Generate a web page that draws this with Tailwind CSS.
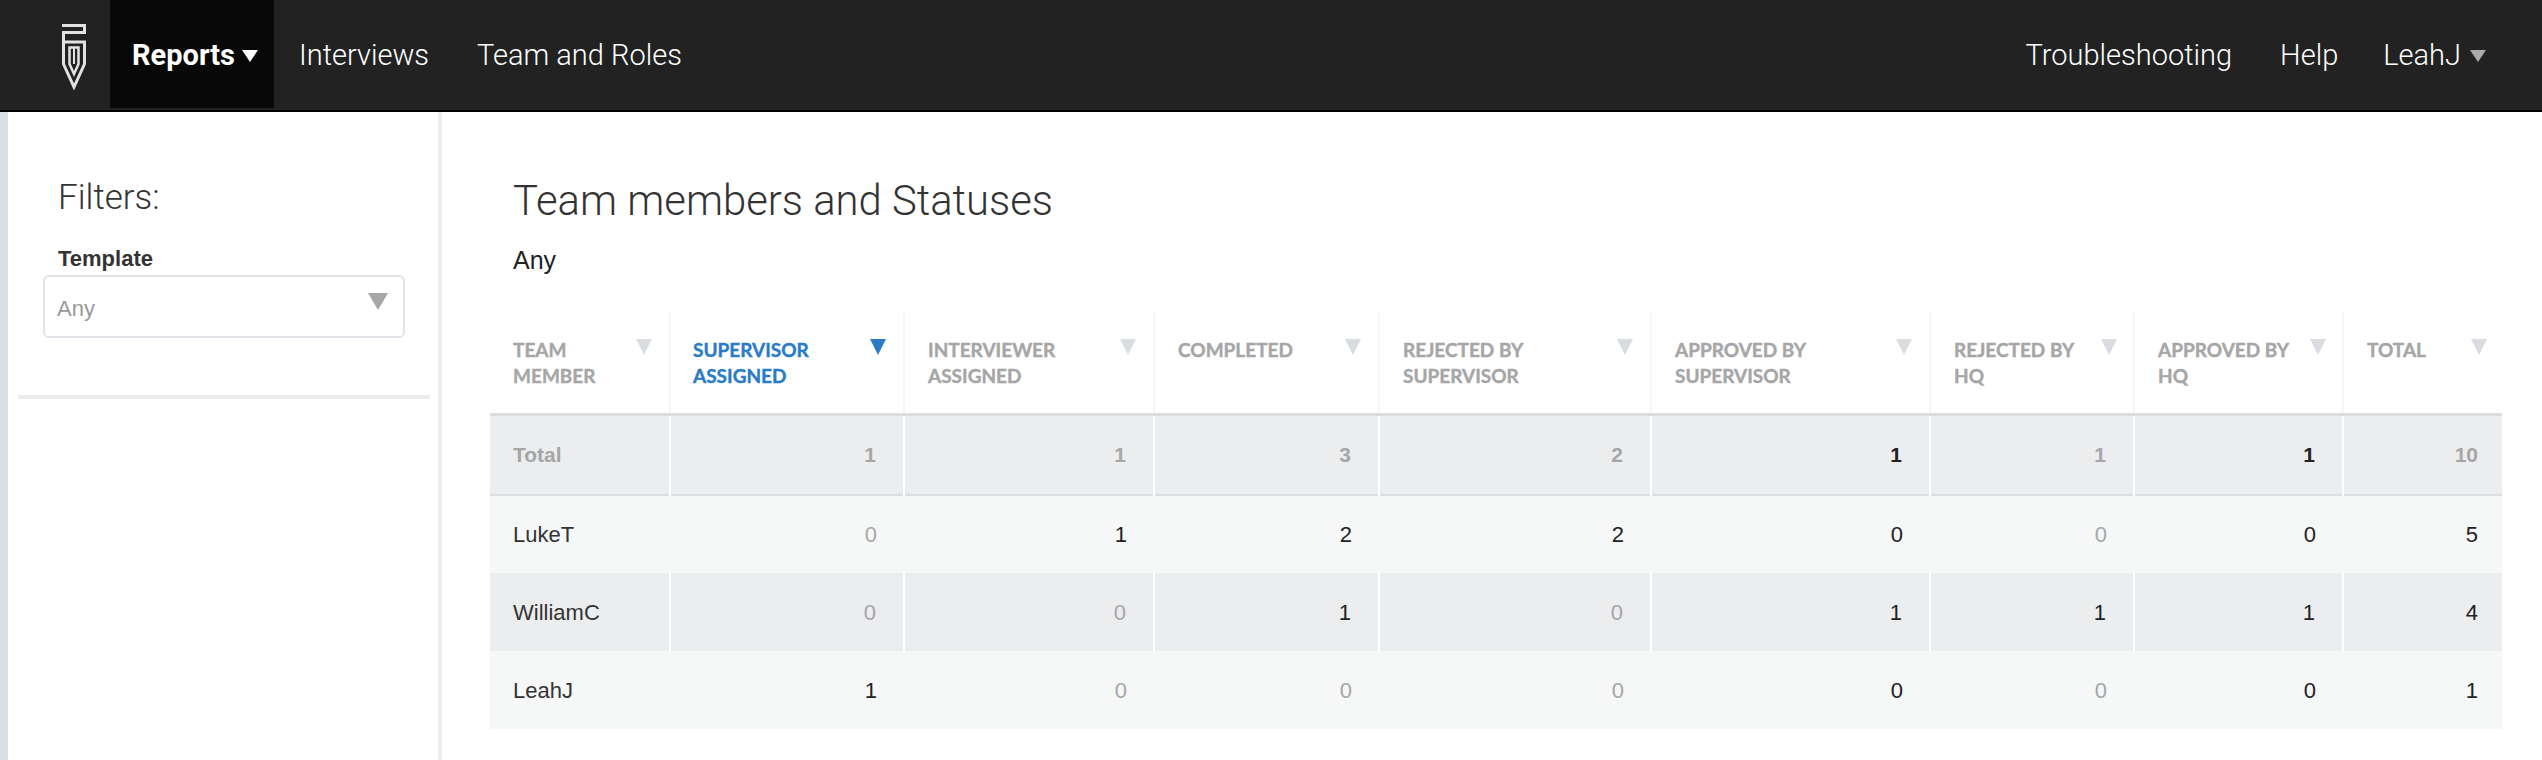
<!DOCTYPE html>
<html lang="en">
<head>
<meta charset="utf-8">
<title>Team members and Statuses</title>
<script src="https://cdn.jsdelivr.net/npm/@tailwindcss/browser@4"></script>
</head>
<body class="bg-white overflow-hidden font-['Liberation_Sans',sans-serif] text-[22px] text-[#333]">
<div class="h-[760px] w-[2542px] flex flex-col overflow-hidden">
  <header class="h-[112px] shrink-0 bg-[#222] border-b-2 border-black flex items-start font-['Roboto',sans-serif] text-[29px] leading-[34px] text-white font-light">
    <a class="w-[110px] h-[110px] flex pl-[62px] pt-[24px]">
      <svg width="24" height="66" viewBox="0 0 24 66" fill="none" stroke="#e2e2e2" stroke-width="3">
        <path d="M0 1.5H22.5V8.5H1.5V18H24M1.5 18V40L12 63L22.5 40V18"/>
        <path d="M7.5 23.5H16.5V40L12 50L7.5 40Z" stroke-width="2.5"/>
        <path d="M12 23V40" stroke-width="2"/>
      </svg>
    </a>
    <a class="w-[164px] h-[108px] bg-[#080808] flex items-center pl-[22px] pt-[1px] font-bold gap-[7px]">Reports
      <span class="w-0 h-0 border-x-[8px] border-x-transparent border-t-[12px] border-t-white mt-[3px]"></span></a>
    <a class="h-[108px] flex items-center ml-[25px] pt-[1px]">Interviews</a>
    <a class="h-[108px] flex items-center ml-[48px] pt-[1px]">Team and Roles</a>
    <div class="ml-auto flex items-center h-[108px] pr-[56px] pt-[1px]">
      <a>Troubleshooting</a>
      <a class="ml-[48px]">Help</a>
      <a class="ml-[45px]">LeahJ</a>
      <span class="ml-[9px] mt-[3px] w-0 h-0 border-x-[8px] border-x-transparent border-t-[12px] border-t-[#aaa]"></span>
    </div>
  </header>
  <div class="flex flex-1 min-h-0">
    <div class="w-[8px] bg-[#dce0e4] shrink-0"></div>
    <aside class="w-[434px] shrink-0 border-r-4 border-[#ececee] pt-[64px] pl-[10px] pr-[8px]">
      <div class="pl-[40px] font-['Roboto',sans-serif] font-light text-[35px] leading-[44px] text-[#333]">Filters:</div>
      <div class="pl-[40px] mt-[26px] font-bold leading-[26px]">Template</div>
      <div class="ml-[25px] mt-[3px] w-[362px] h-[63px] border-2 border-[#dfe3e7] rounded-[6px] flex items-center justify-between pl-[12px] pr-[15px] text-[#999]">
        <span class="mt-[4px]">Any</span>
        <span class="w-0 h-0 border-x-[10px] border-x-transparent border-t-[17px] border-t-[#a6a6a6] -mt-[10px]"></span>
      </div>
      <div class="h-[4px] bg-[#ececee] mt-[57px]"></div>
    </aside>
    <main class="flex-1 min-w-0 pl-[48px]">
      <h1 class="pl-[23px] mt-[62px] font-['Roboto',sans-serif] font-light text-[41.8px] leading-[54px] text-[#333]">Team members and Statuses</h1>
      <p class="pl-[23px] mt-[16px] text-[25px] leading-[32px] text-[#222]">Any</p>
      <table class="mt-[35px] w-[2012px] table-fixed border-collapse">
        <colgroup>
          <col class="w-[180px]"><col class="w-[234px]"><col class="w-[250px]"><col class="w-[225px]"><col class="w-[272px]"><col class="w-[279px]"><col class="w-[204px]"><col class="w-[209px]"><col class="w-[159px]">
        </colgroup>
        <thead class="font-['Lato',sans-serif] text-[19px] leading-[26px] text-[#a6a6a6] [-webkit-text-stroke:0.4px]">
          <tr class="h-[103px] border-b-[3px] border-[#dcdddf] align-top">
            <th class="border-r-2 border-[#f5f6f6] font-bold text-left pt-[26px] pl-[23px] pr-[17px]"><div class="flex justify-between"><span>TEAM<br>MEMBER</span><i class="block shrink-0 mt-[2px] w-0 h-0 border-x-[8px] border-x-transparent border-t-[16px] border-t-[#d9dde1]"></i></div></th>
            <th class="border-r-2 border-[#f5f6f6] font-bold text-left pt-[26px] pl-[22px] pr-[17px] text-[#2a7cc7]"><div class="flex justify-between"><span>SUPERVISOR<br>ASSIGNED</span><i class="block shrink-0 mt-[2px] w-0 h-0 border-x-[8px] border-x-transparent border-t-[16px] border-t-[#2a7cc7]"></i></div></th>
            <th class="border-r-2 border-[#f5f6f6] font-bold text-left pt-[26px] pl-[23px] pr-[17px]"><div class="flex justify-between"><span>INTERVIEWER<br>ASSIGNED</span><i class="block shrink-0 mt-[2px] w-0 h-0 border-x-[8px] border-x-transparent border-t-[16px] border-t-[#d9dde1]"></i></div></th>
            <th class="border-r-2 border-[#f5f6f6] font-bold text-left pt-[26px] pl-[23px] pr-[17px]"><div class="flex justify-between"><span>COMPLETED</span><i class="block shrink-0 mt-[2px] w-0 h-0 border-x-[8px] border-x-transparent border-t-[16px] border-t-[#d9dde1]"></i></div></th>
            <th class="border-r-2 border-[#f5f6f6] font-bold text-left pt-[26px] pl-[23px] pr-[17px]"><div class="flex justify-between"><span>REJECTED BY<br>SUPERVISOR</span><i class="block shrink-0 mt-[2px] w-0 h-0 border-x-[8px] border-x-transparent border-t-[16px] border-t-[#d9dde1]"></i></div></th>
            <th class="border-r-2 border-[#f5f6f6] font-bold text-left pt-[26px] pl-[23px] pr-[17px]"><div class="flex justify-between"><span>APPROVED BY<br>SUPERVISOR</span><i class="block shrink-0 mt-[2px] w-0 h-0 border-x-[8px] border-x-transparent border-t-[16px] border-t-[#d9dde1]"></i></div></th>
            <th class="border-r-2 border-[#f5f6f6] font-bold text-left pt-[26px] pl-[23px] pr-[16px]"><div class="flex justify-between"><span>REJECTED BY<br>HQ</span><i class="block shrink-0 mt-[2px] w-0 h-0 border-x-[8px] border-x-transparent border-t-[16px] border-t-[#d9dde1]"></i></div></th>
            <th class="border-r-2 border-[#f5f6f6] font-bold text-left pt-[26px] pl-[23px] pr-[16px]"><div class="flex justify-between"><span>APPROVED BY<br>HQ</span><i class="block shrink-0 mt-[2px] w-0 h-0 border-x-[8px] border-x-transparent border-t-[16px] border-t-[#d9dde1]"></i></div></th>
            <th class="font-bold text-left pt-[26px] pl-[23px] pr-[15px]"><div class="flex justify-between"><span>TOTAL</span><i class="block shrink-0 mt-[2px] w-0 h-0 border-x-[8px] border-x-transparent border-t-[16px] border-t-[#d9dde1]"></i></div></th>
          </tr>
        </thead>
        <tbody class="text-right">
          <tr class="h-[81px] bg-[#ecedef] border-b-2 border-[#dcdddf] font-bold text-[21px] text-[#a6a6a6]">
            <td class="border-r-2 border-white text-left pl-[23px]">Total</td>
            <td class="border-r-2 border-white pr-[27px]">1</td>
            <td class="border-r-2 border-white pr-[27px]">1</td>
            <td class="border-r-2 border-white pr-[27px]">3</td>
            <td class="border-r-2 border-white pr-[27px]">2</td>
            <td class="border-r-2 border-white pr-[27px] text-[#222]">1</td>
            <td class="border-r-2 border-white pr-[27px]">1</td>
            <td class="border-r-2 border-white pr-[27px] text-[#222]">1</td>
            <td class="pr-[24px]">10</td>
          </tr>
          <tr class="h-[78px] bg-[#f6f8f8] text-[#222]">
            <td class="text-left pl-[23px] text-[#333]">LukeT</td>
            <td class="pr-[27px] text-[#a6a6a6]">0</td>
            <td class="pr-[27px]">1</td>
            <td class="pr-[27px]">2</td>
            <td class="pr-[27px]">2</td>
            <td class="pr-[27px]">0</td>
            <td class="pr-[27px] text-[#a6a6a6]">0</td>
            <td class="pr-[27px]">0</td>
            <td class="pr-[24px]">5</td>
          </tr>
          <tr class="h-[78px] bg-[#ecedef] text-[#222]">
            <td class="border-r-2 border-white text-left pl-[23px] text-[#333]">WilliamC</td>
            <td class="border-r-2 border-white pr-[27px] text-[#a6a6a6]">0</td>
            <td class="border-r-2 border-white pr-[27px] text-[#a6a6a6]">0</td>
            <td class="border-r-2 border-white pr-[27px]">1</td>
            <td class="border-r-2 border-white pr-[27px] text-[#a6a6a6]">0</td>
            <td class="border-r-2 border-white pr-[27px]">1</td>
            <td class="border-r-2 border-white pr-[27px]">1</td>
            <td class="border-r-2 border-white pr-[27px]">1</td>
            <td class="pr-[24px]">4</td>
          </tr>
          <tr class="h-[78px] bg-[#f6f8f8] text-[#222]">
            <td class="text-left pl-[23px] text-[#333]">LeahJ</td>
            <td class="pr-[27px]">1</td>
            <td class="pr-[27px] text-[#a6a6a6]">0</td>
            <td class="pr-[27px] text-[#a6a6a6]">0</td>
            <td class="pr-[27px] text-[#a6a6a6]">0</td>
            <td class="pr-[27px]">0</td>
            <td class="pr-[27px] text-[#a6a6a6]">0</td>
            <td class="pr-[27px]">0</td>
            <td class="pr-[24px]">1</td>
          </tr>
        </tbody>
      </table>
    </main>
  </div>
</div>
</body>
</html>
